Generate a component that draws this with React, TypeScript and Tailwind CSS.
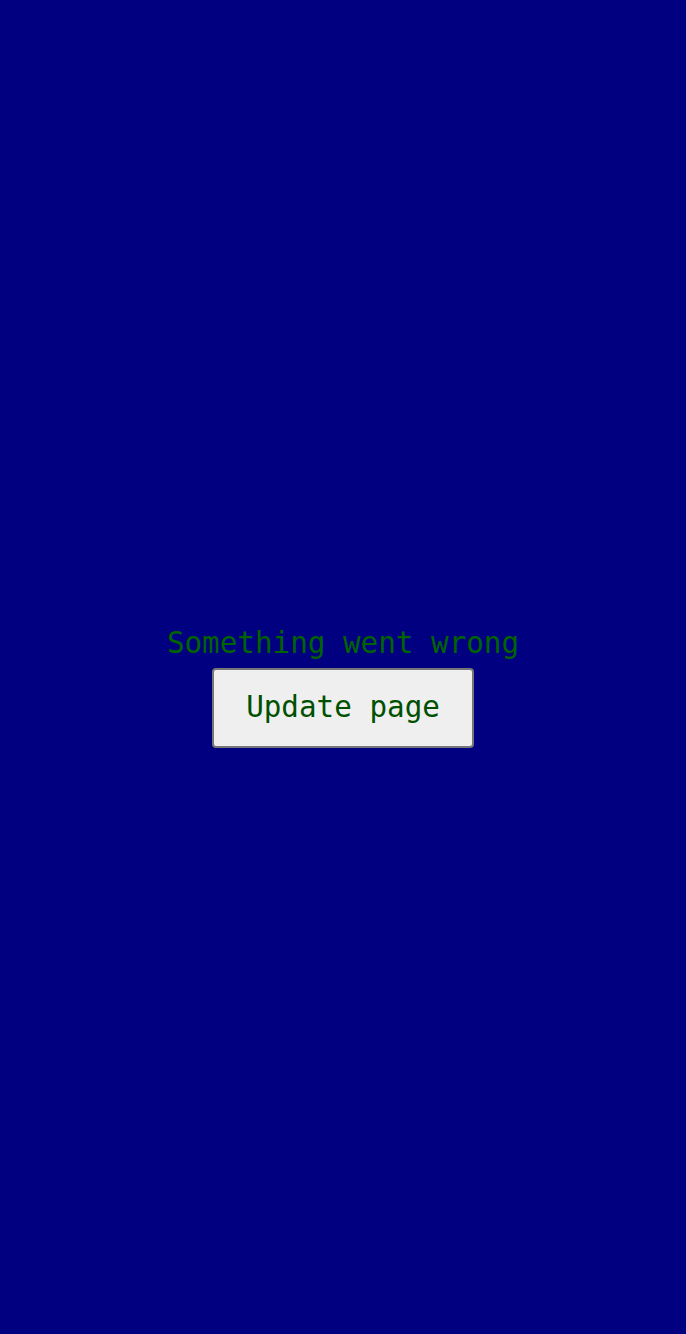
export default function App() {
  return (
    <div className="min-h-screen w-full bg-[#000080] flex flex-col items-center pt-[626px] font-['DejaVu_Sans_Mono',monospace]">
      <div className="text-[29.25px] leading-[34px] text-[#006400]">Something went wrong</div>
      <button className="mt-[8px] w-[262px] h-[80px] bg-[#efefef] border-2 border-[#767676] rounded-[4px] text-[29.25px] text-[#005000] font-['DejaVu_Sans_Mono',monospace]">
        Update page
      </button>
    </div>
  );
}
